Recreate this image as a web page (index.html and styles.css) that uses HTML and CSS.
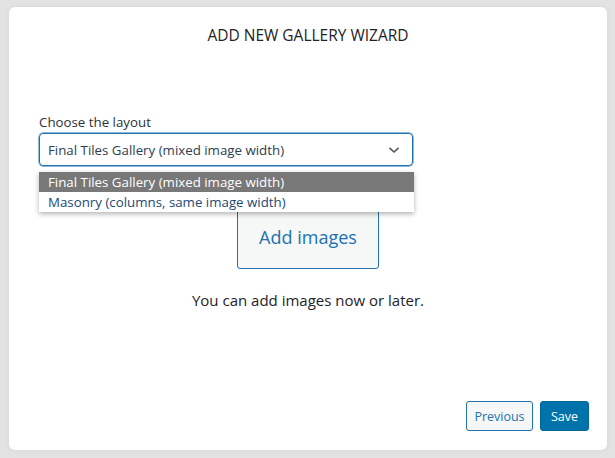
FILE: index.html
```html
<!DOCTYPE html>
<html lang="en">
<head>
    <meta charset="UTF-8">
    <meta name="viewport" content="width=device-width, initial-scale=1.0">
    <title>Add New Gallery Wizard</title>
    <link rel="stylesheet" href="styles.css">
</head>
<body>
    <div class="wizard">
        <h1 class="title">ADD NEW GALLERY WIZARD</h1>

        <div class="step">
            <label class="field-label">Choose the layout</label>
            <div class="select-wrap">
                <div class="select">
                    <span>Final Tiles Gallery (mixed image width)</span>
                    <svg class="chevron" width="12" height="8" viewBox="0 0 12 8">
                        <path d="M1.5 1.8 L6 6 L10.5 1.8" fill="none" stroke="#50575e" stroke-width="1.6"/>
                    </svg>
                </div>
                <ul class="options">
                    <li class="option selected">Final Tiles Gallery (mixed image width)</li>
                    <li class="option">Masonry (columns, same image width)</li>
                </ul>
            </div>

            <div class="images-area">
                <button class="add-images">Add images</button>
                <p class="hint">You can add images now or later.</p>
            </div>
        </div>

        <div class="actions">
            <button class="btn btn-secondary">Previous</button>
            <button class="btn btn-primary">Save</button>
        </div>
    </div>
</body>
</html>
```

FILE: styles.css
```css
body {
    margin: 0;
    padding: 7px 8px 8px 9px;
    background: #e3e3e3;
    font-family: "Open Sans", "Noto Sans", sans-serif;
    color: #1d2327;
}
.wizard {
    background: #fff;
    border-radius: 6px;
    height: 443px;
    box-sizing: border-box;
    padding: 18px 18px 19px 30px;
    display: flex;
    flex-direction: column;
    box-shadow: 0 0 6px rgba(0,0,0,0.06);
}
.title {
    margin: 0;
    font-size: 15.5px;
    font-weight: 400;
    line-height: 20px;
    text-align: center;
    padding-right: 12px;
    color: #1d2327;
}
.step {
    flex: 1;
    padding-top: 68px;
}
.field-label {
    display: block;
    font-size: 13.3px;
    line-height: 18px;
    color: #2c3338;
    margin-bottom: 2px;
}
.select-wrap {
    position: relative;
    width: 374px;
}
.select {
    height: 33px;
    box-sizing: border-box;
    border: 1px solid #2271b1;
    border-radius: 4px;
    box-shadow: 0 0 0 0.5px #2271b1;
    padding: 0 12px 0 8px;
    display: flex;
    align-items: center;
    justify-content: space-between;
    font-size: 13.3px;
    color: #2c3e50;
}
.options {
    position: absolute;
    top: 39px;
    left: 0;
    width: 375px;
    margin: 0;
    padding: 0;
    list-style: none;
    background: #fff;
    box-shadow: 0 2px 5px rgba(0,0,0,0.3);
    z-index: 2;
}
.option {
    height: 20px;
    line-height: 20px;
    padding-left: 9px;
    font-size: 13.3px;
    color: #1d4a73;
}
.option.selected {
    background: #787878;
    color: #fff;
}
.images-area {
    display: flex;
    flex-direction: column;
    align-items: center;
    margin-top: 39px;
    padding-right: 12px;
}
.add-images {
    width: 142px;
    height: 64px;
    border: 1px solid #2271b1;
    border-radius: 3px;
    background: #f6f7f7;
    color: #2271b1;
    font-family: inherit;
    font-size: 18px;
    cursor: pointer;
}
.hint {
    margin: 21px 0 0;
    font-size: 15px;
    line-height: 20px;
    color: #1d2327;
}
.actions {
    display: flex;
    justify-content: flex-end;
    gap: 7px;
}
.btn {
    height: 30px;
    padding: 0;
    border-radius: 3px;
    font-family: inherit;
    font-size: 12.5px;
    cursor: pointer;
}
.btn-secondary {
    width: 67px;
    border: 1px solid #2271b1;
    background: #f6f7f7;
    color: #2271b1;
}
.btn-primary {
    width: 49px;
    border: 1px solid #006799;
    background: #0073aa;
    color: #fff;
}
```
